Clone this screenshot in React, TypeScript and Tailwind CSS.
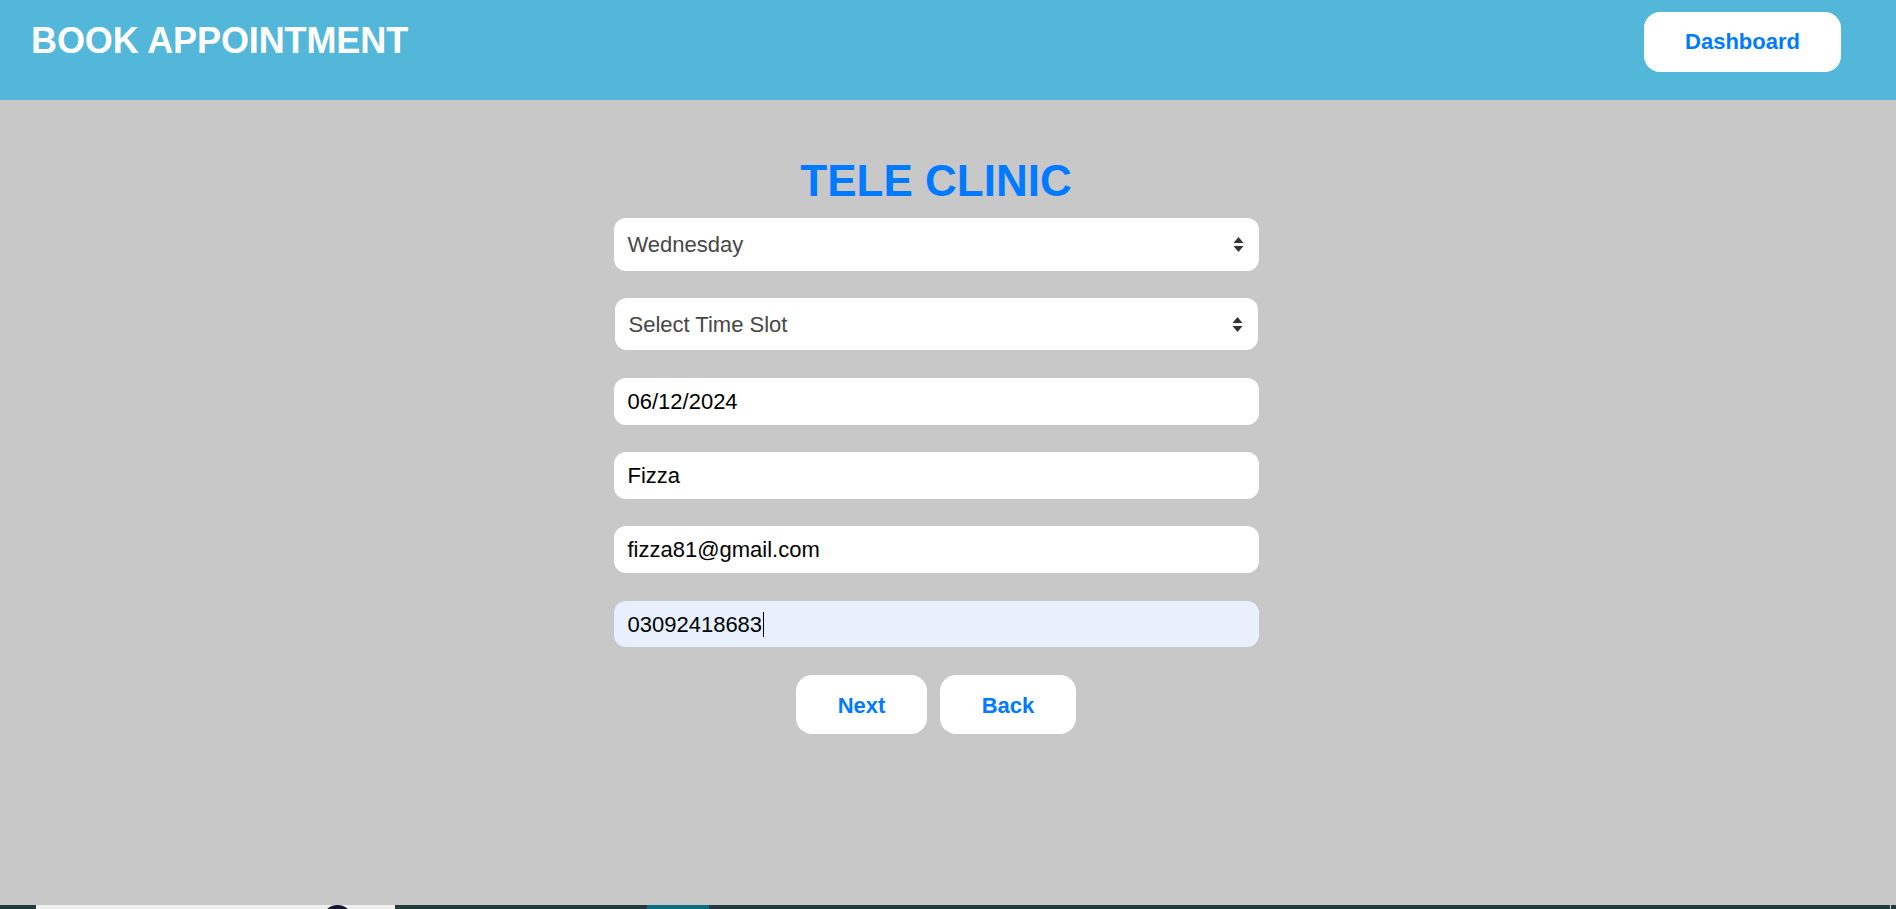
import React from "react";

function Arrows() {
  return (
    <svg width="11" height="15" viewBox="0 0 11 15" className="shrink-0">
      <path d="M5.5 0 L10.5 6 L0.5 6 Z" fill="#333" />
      <path d="M5.5 15 L10.5 9 L0.5 9 Z" fill="#333" />
    </svg>
  );
}

function SelectBox({ label, className }: { label: string; className: string }) {
  return (
    <div
      className={`flex items-center justify-between bg-white rounded-[12px] pl-[14px] pr-[15px] text-[22px] text-[#474747] ${className}`}
    >
      <span>{label}</span>
      <Arrows />
    </div>
  );
}

function Field({
  value,
  className,
  caret,
}: {
  value: string;
  className: string;
  caret?: boolean;
}) {
  return (
    <div className={`flex items-center rounded-[12px] pl-[14px] text-[22px] text-black ${className}`}>
      <span>{value}</span>
      {caret && <span className="ml-[1px] inline-block w-[1px] h-[25px] bg-black" />}
    </div>
  );
}

export default function App() {
  return (
    <div className="w-[1896px] h-[909px] flex flex-col font-['Liberation_Sans',Arial,sans-serif] overflow-hidden">
      <header className="h-[100px] shrink-0 bg-[#52b7d9] flex items-start justify-between pl-[31px] pr-[55px] pt-[12px]">
        <h1 className="mt-[9px] text-[36px] leading-[40px] font-bold text-white tracking-[-0.1px]">
          BOOK APPOINTMENT
        </h1>
        <button className="w-[197px] h-[60px] bg-white rounded-[16px] flex items-center justify-center pb-[1px] text-[22px] font-bold text-[#007bff]">
          Dashboard
        </button>
      </header>

      <main className="flex-1 bg-[#c8c8c8] flex flex-col items-center pr-[24px] pt-[55px]">
        <h2 className="text-[44px] leading-[52px] font-bold text-[#007bff] mb-[11px]">
          TELE CLINIC
        </h2>
        <div className="w-[645px] flex flex-col">
          <SelectBox label="Wednesday" className="h-[53px] mb-[27px]" />
          <SelectBox label="Select Time Slot" className="h-[52px] mb-[28px] mx-[1px]" />
          <Field value="06/12/2024" className="h-[47px] mb-[27px] bg-white" />
          <Field value="Fizza" className="h-[47px] mb-[27px] bg-white" />
          <Field value="fizza81@gmail.com" className="h-[47px] mb-[28px] bg-white" />
          <Field value="03092418683" className="h-[46px] bg-[#e8f0fe]" caret />
        </div>
        <div className="flex gap-[13px] mt-[28px]">
          <button className="w-[131px] h-[59px] bg-white rounded-[16px] flex items-center justify-center pt-[2px] text-[22px] font-bold text-[#007bff]">
            Next
          </button>
          <button className="w-[136px] h-[59px] bg-white rounded-[16px] flex items-center justify-center pt-[2px] text-[22px] font-bold text-[#007bff]">
            Back
          </button>
        </div>
      </main>

      <div className="h-[4px] shrink-0 flex bg-[#243b3b]">
        <div className="w-[36px]" />
        <div className="w-[359px] bg-[#efefef] relative">
          <div className="absolute left-[286px] top-0 w-[31px] h-[31px] rounded-full bg-[#15132e]" />
        </div>
        <div className="w-[252px]" />
        <div className="w-[62px] bg-[#106a80]" />
        <div className="flex-1" />
        <div className="w-[1px] bg-[#d0d0d0] mr-[5px]" />
      </div>
    </div>
  );
}
